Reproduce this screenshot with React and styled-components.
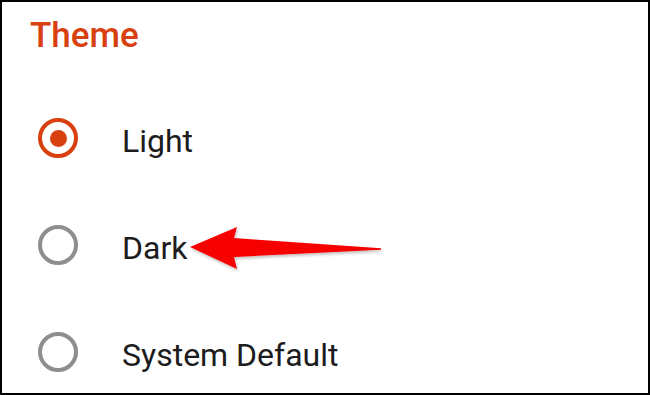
import React from 'react'
import styled, { createGlobalStyle } from 'styled-components'

const GlobalStyle = createGlobalStyle`
  html, body {
    margin: 0;
    padding: 0;
    background: #fff;
  }
  body {
    font-family: Roboto, "Noto Sans", Arial, sans-serif;
  }
`

const Screen = styled.div`
  position: relative;
  width: 650px;
  height: 395px;
  box-sizing: border-box;
  border: 2px solid #000;
  background: #fff;
  padding: 15.5px 0 0 0;
  overflow: hidden;
`

const Title = styled.h2`
  margin: 0 0 32px 28px;
  font-size: 35px;
  line-height: 1;
  font-weight: 500;
  color: #d9400f;
`

const Options = styled.div`
  display: flex;
  flex-direction: column;
`

const Option = styled.label`
  display: flex;
  align-items: center;
  height: 107px;
  padding-left: 36px;
  cursor: pointer;
`

const Radio = styled.span`
  display: flex;
  align-items: center;
  justify-content: center;
  width: 40px;
  height: 40px;
  box-sizing: border-box;
  border-radius: 50%;
  border: 4px solid ${p => (p.$checked ? '#d9400f' : '#8e8e8e')};
  flex-shrink: 0;

  &::after {
    content: '';
    display: ${p => (p.$checked ? 'block' : 'none')};
    width: 17px;
    height: 17px;
    border-radius: 50%;
    background: #d9400f;
  }
`

const Label = styled.span`
  margin-left: 44px;
  padding-top: 5px;
  font-size: 32px;
  line-height: 1;
  color: #1c1c1c;
`

const Arrow = styled.svg`
  position: absolute;
  left: 0;
  top: 0;
  width: 650px;
  height: 395px;
  pointer-events: none;
`

const themes = [
  { id: 'light', name: 'Light' },
  { id: 'dark', name: 'Dark' },
  { id: 'system', name: 'System Default' }
]

export default function App() {
  const selected = 'light'
  return (
    <>
      <GlobalStyle />
      <Screen>
        <Title>Theme</Title>
        <Options>
          {themes.map(t => (
            <Option key={t.id}>
              <Radio $checked={t.id === selected} />
              <Label>{t.name}</Label>
            </Option>
          ))}
        </Options>
        {/* callout arrow pointing at "Dark" */}
        <Arrow viewBox="0 0 650 395">
          <defs>
            <filter id="shadow" x="-10%" y="-30%" width="120%" height="160%">
              <feDropShadow dx="1" dy="2" stdDeviation="1.5" floodColor="#000" floodOpacity="0.25" />
            </filter>
          </defs>
          <polygon
            points="188,245 235,225 232,236 379,246.3 379,247.7 232,255 235,267"
            fill="#f60000"
            filter="url(#shadow)"
          />
        </Arrow>
      </Screen>
    </>
  )
}
